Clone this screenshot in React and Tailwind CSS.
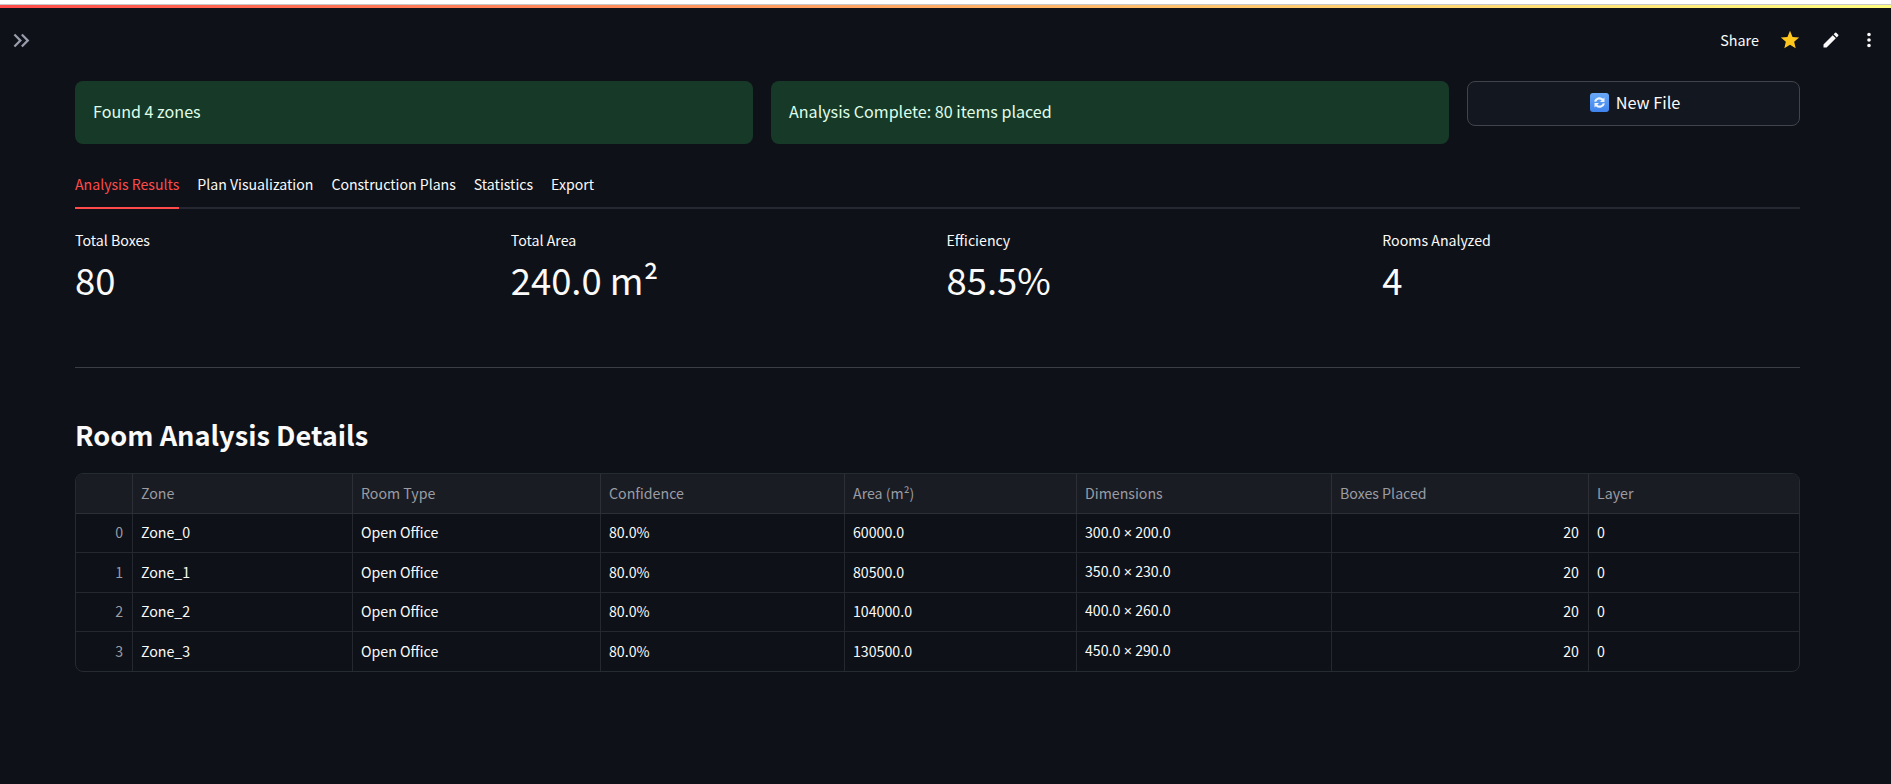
import React from 'react';

const metrics = [
  { label: 'Total Boxes', value: '80' },
  { label: 'Total Area', value: '240.0 m²' },
  { label: 'Efficiency', value: '85.5%' },
  { label: 'Rooms Analyzed', value: '4' },
];

const tabs = ['Analysis Results', 'Plan Visualization', 'Construction Plans', 'Statistics', 'Export'];

const columns = ['', 'Zone', 'Room Type', 'Confidence', 'Area (m²)', 'Dimensions', 'Boxes Placed', 'Layer'];

const rows = [
  ['0', 'Zone_0', 'Open Office', '80.0%', '60000.0', ['300.0', '200.0'], '20', '0'],
  ['1', 'Zone_1', 'Open Office', '80.0%', '80500.0', ['350.0', '230.0'], '20', '0'],
  ['2', 'Zone_2', 'Open Office', '80.0%', '104000.0', ['400.0', '260.0'], '20', '0'],
  ['3', 'Zone_3', 'Open Office', '80.0%', '130500.0', ['450.0', '290.0'], '20', '0'],
];

const gridCols = 'grid grid-cols-[57px_220px_248px_244px_232px_255px_257px_1fr]';

const RefreshEmoji = () => (
  <svg width="19" height="19" viewBox="0 0 19 19">
    <defs>
      <linearGradient id="emojiBlue" x1="0" y1="0" x2="0" y2="1">
        <stop offset="0" stopColor="#6aa9f7" />
        <stop offset="1" stopColor="#3f83ee" />
      </linearGradient>
    </defs>
    <rect width="19" height="19" rx="3" fill="url(#emojiBlue)" />
    <path d="M4 8.500A5.500 5.500 0 0 1 13.200 5.800L14.500 4.500v4.500H10l1.700-1.700A3.400 3.400 0 0 0 6.200 8.800Z" fill="#eef4fd" />
    <path d="M15 10.500A5.500 5.500 0 0 1 5.800 13.200L4.500 14.500V10H9l-1.700 1.700A3.400 3.400 0 0 0 12.800 10.200Z" fill="#eef4fd" />
  </svg>
);

const App = () => {
  return (
    <div className="min-h-screen bg-[#0e1117] text-[#fafafa] overflow-hidden font-['Noto_Sans_CJK_SC',sans-serif]">
      {/* browser edge + streamlit decoration */}
      <div className="h-[4px] bg-white" />
      <div className="h-[1px] bg-[#c8c8c8]" />
      <div className="h-[3px] bg-gradient-to-r from-[#ff4b4b] to-[#fffd80]" />

      {/* Header */}
      <header className="h-[64px] flex items-center justify-between pl-[8px] pr-[11px]">
        <svg width="27" height="27" viewBox="0 0 24 24" fill="#9a9dab">
          <path d="M6.410 6 5 7.410 9.580 12 5 16.590 6.410 18l6-6z" />
          <path d="M13 6l-1.410 1.410L16.170 12l-4.580 4.590L13 18l6-6z" />
        </svg>
        <div className="flex items-center">
          <span className="text-[14.400px] leading-5 mr-[20px] pb-[1px]">Share</span>
          <svg width="22" height="22" viewBox="0 0 24 24" fill="#ffc61e" className="mr-[20px]">
            <path d="M12 17.270 18.180 21l-1.640-7.030L22 9.240l-7.190-.61L12 2 9.190 8.630 2 9.240l5.460 4.730L5.820 21z" />
          </svg>
          <svg width="20" height="20" viewBox="0 0 24 24" fill="#fafafa" className="mr-[17px]">
            <path d="M3 17.250V21h3.750L17.810 9.940l-3.750-3.750L3 17.250zM20.710 7.040a1 1 0 0 0 0-1.410l-2.340-2.340a1 1 0 0 0-1.410 0l-1.830 1.830 3.750 3.750 1.830-1.830z" />
          </svg>
          <svg width="22" height="22" viewBox="0 0 24 24" fill="#fafafa">
            <path d="M12 8a2 2 0 1 0 0-4 2 2 0 0 0 0 4zm0 2a2 2 0 1 0 0 4 2 2 0 0 0 0-4zm0 6a2 2 0 1 0 0 4 2 2 0 0 0 0-4z" />
          </svg>
        </div>
      </header>

      <main className="w-[1725px] ml-[75px]">
        {/* Status row */}
        <div className="flex gap-[18px] items-start mt-[9px]">
          <div className="w-[678px] h-[63px] rounded-lg bg-[#173928] text-[#dffde9] flex items-center px-[18px] pb-[2px] text-[16.100px]">
            Found 4 zones
          </div>
          <div className="w-[678px] h-[63px] rounded-lg bg-[#173928] text-[#dffde9] flex items-center px-[18px] pb-[2px] text-[16.100px]">
            Analysis Complete: 80 items placed
          </div>
          <button className="w-[333px] h-[45px] rounded-lg bg-[#13171f] border border-[#41444c] flex items-center justify-center gap-[7px] pl-[3px] pb-[2px] text-[16.300px] text-[#fafafa]">
            <RefreshEmoji />
            New File
          </button>
        </div>

        {/* Tabs */}
        <nav className="flex gap-[18px] mt-[27px] border-b-2 border-[#262730] h-[38px]">
          {tabs.map((tab, i) => (
            <div
              key={tab}
              className={
                i === 0
                  ? 'h-[38px] border-b-2 border-[#ff4b4b] text-[#ff4b4b] text-[14.120px] leading-[26px]'
                  : 'h-[38px] text-[#fafafa] text-[14.120px] leading-[26px]'
              }
            >
              {tab}
            </div>
          ))}
        </nav>

        {/* Metrics */}
        <div className="grid grid-cols-4 gap-[18px] mt-[20px]">
          {metrics.map((m) => (
            <div key={m.label}>
              <div className="text-[14.200px] leading-[22px]">{m.label}</div>
              <div className="text-[36.400px] leading-[56px]">{m.value}</div>
            </div>
          ))}
        </div>

        <hr className="border-0 h-px bg-[#3c3e46] mt-[60px]" />

        {/* Heading */}
        <h2 className="text-[27.200px] font-semibold leading-[40px] mt-[46px]">Room Analysis Details</h2>

        {/* Table */}
        <div className="mt-[19px] rounded-lg border border-[#262a31] overflow-hidden text-[14.200px]">
          <div className={`${gridCols} h-[40px] bg-[#1a1c24] border-b border-[#2c2f36]`}>
            {columns.map((c, i) => (
              <div key={i} className="flex items-center px-[8px] text-[#9a9ca3] border-r border-[#2c2f36] last:border-r-0">
                {c}
              </div>
            ))}
          </div>
          {rows.map((row, r) => (
            <div key={r} className={`${gridCols} h-[39.250px] border-b border-[#25282e] last:border-b-0`}>
              {row.map((cell, i) => (
                <div
                  key={i}
                  className={
                    i === 0
                      ? 'flex items-center justify-end px-[9px] text-[#9a9ca3] border-r border-[#25282e]'
                      : i === 6
                        ? 'flex items-center justify-end px-[9px] border-r border-[#25282e]'
                        : 'flex items-center px-[8px] border-r border-[#25282e] last:border-r-0'
                  }
                >
                  {i === 5 ? (
                    <span>
                      {cell[0]} <span className="font-['Liberation_Sans',sans-serif]">×</span> {cell[1]}
                    </span>
                  ) : (
                    cell
                  )}
                </div>
              ))}
            </div>
          ))}
        </div>
      </main>
    </div>
  );
};

export default App;
